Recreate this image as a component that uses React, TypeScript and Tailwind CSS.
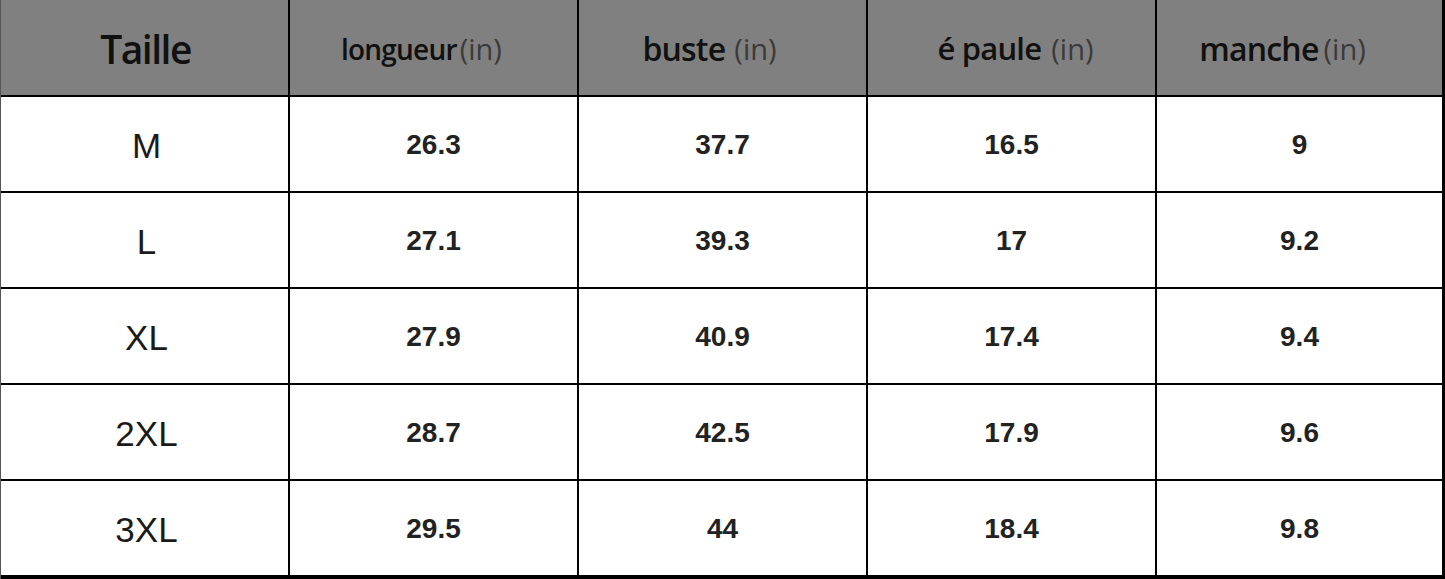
const headers: { label: string; size: string; gap: string; shift: string }[] = [
  { label: 'longueur', size: 'text-[28px]', gap: 'ml-[3px]', shift: 'pr-[24px]' },
  { label: 'buste', size: 'text-[32px]', gap: 'ml-[9px]', shift: 'pr-[26px]' },
  { label: 'é paule', size: 'text-[31px]', gap: 'ml-[10px]', shift: 'pl-[8px]' },
  { label: 'manche', size: 'text-[32px]', gap: 'ml-[5px]', shift: 'pr-[34px]' },
]

const rows: [string, string, string, string, string][] = [
  ['M', '26.3', '37.7', '16.5', '9'],
  ['L', '27.1', '39.3', '17', '9.2'],
  ['XL', '27.9', '40.9', '17.4', '9.4'],
  ['2XL', '28.7', '42.5', '17.9', '9.6'],
  ['3XL', '29.5', '44', '18.4', '9.8'],
]

export default function App() {
  return (
    <div className="w-[1445px] h-[579px] bg-black border-l border-l-[#555] pr-[3px] pb-[4px]">
      <div className="grid h-full grid-cols-[287px_287px_287px_287px_1fr] grid-rows-[95px_94px_94px_94px_94px_94px] gap-[2px]">
        <div className="bg-[#808080] flex items-center justify-center pt-[2px]">
          <span className="text-[39px] font-semibold tracking-[-1.5px] text-[#111] font-['Open_Sans',sans-serif] leading-none pl-[2px]">
            Taille
          </span>
        </div>
        {headers.map(h => (
          <div key={h.label} className={`bg-[#808080] flex items-center justify-center pt-[2px] ${h.shift}`}>
            <span className={`${h.size} font-semibold tracking-[-0.8px] text-[#111] font-['Open_Sans',sans-serif] leading-none`}>
              {h.label}
            </span>
            <span className={`${h.gap} text-[29px] text-[#3a3a3a] font-['Open_Sans',sans-serif] leading-none`}>(in)</span>
          </div>
        ))}
        {rows.map(r => (
          <Row key={r[0]} cells={r} />
        ))}
      </div>
    </div>
  )
}

function Row({ cells }: { cells: string[] }) {
  return (
    <>
      <div className="bg-white flex items-center justify-center pl-[4px] pt-[2px]">
        <span className="text-[35px] text-[#1a1a1a] font-['Liberation_Sans',Arial,sans-serif] leading-none">{cells[0]}</span>
      </div>
      {cells.slice(1).map((c, i) => (
        <div key={i} className="bg-white flex items-center justify-center pt-[2px]">
          <span className="text-[28px] font-bold text-[#222] font-['Liberation_Sans',Arial,sans-serif] leading-none">{c}</span>
        </div>
      ))}
    </>
  )
}
